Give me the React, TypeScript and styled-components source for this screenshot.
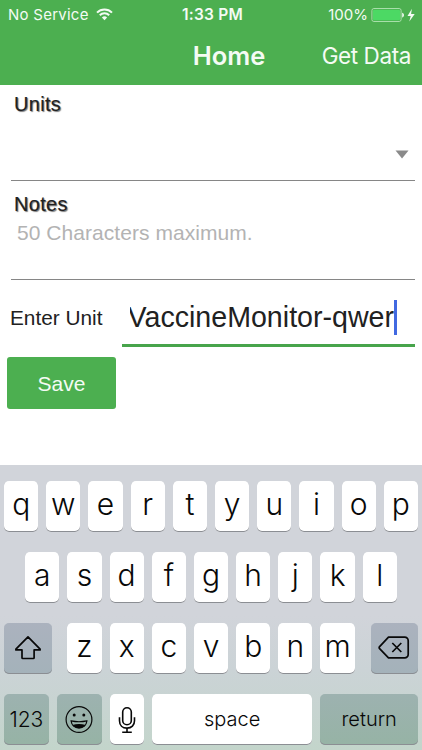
import styled, {createGlobalStyle} from "styled-components";
import {ReactNode, useState} from "react";

const GlobalStyle = createGlobalStyle`
  * {
    box-sizing: border-box;
  }

  body {
    margin: 0;
    background: #fff;
    font-family: "Liberation Sans", Arial, sans-serif;
  }
`

const Screen = styled.div`
  width: 422px;
  height: 750px;
  display: flex;
  flex-direction: column;
  overflow: hidden;
  background: #fff;
`

const Header = styled.header`
  height: 84.5px;
  flex: none;
  background: #4caf50;
  color: #f4fbf4;
  font-family: Inter, sans-serif;
`

const StatusBar = styled.div`
  display: grid;
  grid-template-columns: 1fr auto 1fr;
  align-items: center;
  height: 28px;
  padding: 0 7px 0 8px;
  font-size: 15px;
  line-height: 28px;
`

const StatusGroup = styled.div<{ $end?: boolean }>`
  display: flex;
  align-items: center;
  justify-content: ${({$end}) => $end ? "flex-end" : "flex-start"};
  white-space: nowrap;
  letter-spacing: ${({$end}) => $end ? "0" : "0.25px"};

  svg {
    flex: none;
  }
`

const WifiSlot = styled.span`
  display: flex;
  margin-left: 7px;
`

const Clock = styled.div`
  font-weight: 600;
  font-size: 15.5px;
  letter-spacing: 0.2px;
  padding: 1px 0 0 2px;
`

const NavBar = styled.div`
  display: grid;
  grid-template-columns: 1fr auto 1fr;
  align-items: center;
  height: 56px;
  padding: 0 11px 0 47px;
`

const Title = styled.h1`
  grid-column: 2;
  margin: 0;
  font-size: 25.5px;
  font-weight: 600;
  line-height: 56px;
`

const NavAction = styled.button`
  justify-self: end;
  padding: 0;
  border: 0;
  background: none;
  color: inherit;
  font: 400 22.5px/56px Inter, sans-serif;
  letter-spacing: -0.4px;
`

const Form = styled.main`
  flex: 1;
  padding: 0 7px;
  color: #212121;
`

const Field = styled.section<{ $height: number }>`
  display: flex;
  flex-direction: column;
  height: ${({$height}) => $height}px;
  margin-left: 4px;
  border-bottom: 1px solid #868686;
`

const FieldLabel = styled.label<{ $top: number }>`
  padding: ${({$top}) => $top}px 0 0 3px;
  font-size: 20px;
  line-height: 26px;
  letter-spacing: 0.3px;
  text-shadow: 1px 1px 1px #777;
  -webkit-text-stroke: 0.15px #212121;
`

const SelectBox = styled.div`
  display: flex;
  flex: 1;
  align-items: center;
  justify-content: flex-end;
  padding: 12px 6px 0 0;
`

const Placeholder = styled.div`
  padding-left: 6px;
  color: #b3b3b3;
  font-size: 21px;
  line-height: 31px;
  letter-spacing: 0.05px;
`

const UnitRow = styled.div`
  display: flex;
  height: 67px;
`

const UnitLabel = styled.label`
  flex: none;
  width: 115px;
  padding: 0 0 0 3px;
  font-size: 20.8px;
  line-height: 76px;
`

const UnitInput = styled.div`
  display: flex;
  flex: 1;
  align-items: center;
  min-width: 0;
  padding: 10px 18px 0 7.5px;
  border-bottom: 3px solid #47a44b;
`

const InputText = styled.span`
  display: flex;
  flex: 1;
  justify-content: flex-end;
  min-width: 0;
  overflow: hidden;
  font-size: 28.6px;
  line-height: 38px;
  white-space: nowrap;
`

const Caret = styled.span`
  width: 3px;
  height: 35px;
  flex: none;
  background: #4169e1;
`

const SaveButton = styled.button`
  display: block;
  width: 109px;
  height: 52px;
  margin-top: 9.7px;
  padding: 2px 0 0;
  border: 0;
  border-radius: 3px;
  background: #4caf50;
  color: #f4fbf4;
  font: 400 21px "Liberation Sans", Arial, sans-serif;
`

const KeyboardPanel = styled.div`
  display: flex;
  flex: none;
  flex-direction: column;
  gap: 20.2px;
  height: 285px;
  padding: 15.5px 4px 0;
  background: linear-gradient(#d1d4da 0, #d1d4da 150px, #cbd3d6 205px, #c3d5cb 285px);
  font-family: Inter, sans-serif;
`

const KeyRow = styled.div`
  display: flex;
  justify-content: center;
  gap: 8px;
`

const LetterGroup = styled.div`
  display: flex;
  flex: 1;
  justify-content: center;
  gap: 8px;
`

const tones = {
    light: "#fff",
    slate: "linear-gradient(#abb2be, #a4b2ba)",
    green: "linear-gradient(#9db2b0, #96b3a5)",
}

const KeyCap = styled.button<{ $width: number, $tone: keyof typeof tones, $size: number, $lift: number }>`
  display: flex;
  flex: none;
  align-items: center;
  justify-content: center;
  width: ${({$width}) => $width}px;
  height: 51px;
  padding: 0 0 ${({$lift}) => $lift}px;
  border: 0;
  border-radius: 5px;
  background: ${({$tone}) => tones[$tone]};
  box-shadow: inset 0 -1px 0 #8b8e93;
  color: #080808;
  font-family: inherit;
  font-size: ${({$size}) => $size}px;
  font-weight: ${({$size}) => $size > 25 ? 300 : 350};
  line-height: 1;
`

interface KeyProps {
    children: ReactNode
    label?: string
    width?: number
    tone?: keyof typeof tones
    size?: number
    lift?: number
    onPress?: () => void
}

const Key = ({children, label, width = 34.2, tone = "light", size = 30, lift = 4, onPress}: KeyProps) => (
    <KeyCap aria-label={label} $width={width} $tone={tone} $size={size} $lift={lift} onClick={onPress}>{children}</KeyCap>
)

const WifiIcon = () => (
    <svg width="17" height="13" viewBox="0 0 17 13" fill="none" stroke="#f4fbf4" strokeWidth="2">
        <path d="M1 4.6a10.6 10.6 0 0 1 15 0" />
        <path d="M3.8 7.3a6.6 6.6 0 0 1 9.4 0" />
        <path d="M5.9 9.6a3.7 3.7 0 0 1 5.2 0L8.5 12.2z" fill="#f4fbf4" stroke="none" />
    </svg>
)

const BatteryIcon = () => (
    <svg width="47" height="16" viewBox="0 0 47 16">
        <rect x="3.9" y="1.5" width="29.2" height="13" rx="2" fill="none" stroke="#a8dfaa" />
        <rect x="5" y="2.7" width="27" height="10.6" rx="1" fill="#4cd964" />
        <path d="M34.2 5.7c2.3.5 2.3 4.2 0 4.8z" fill="#f4fbf4" />
        <path d="M43.9 1.8l-4.4 7.3h3.2l-1.4 5.5 5.4-7.6h-3.6z" fill="#f4fbf4" />
    </svg>
)

const ArrowDown = () => (
    <svg width="14" height="9" viewBox="0 0 14 9">
        <path d="M.5.5h13L7 8.5z" fill="#8a8a8a" />
    </svg>
)

const ShiftIcon = () => (
    <svg width="28" height="26" viewBox="0 0 28 26" fill="none" stroke="#080808" strokeWidth="1.7" strokeLinejoin="round">
        <path d="M14 1.8L26.1 14.1v.8h-6v7.8a.8.8 0 0 1-.8.8H8.8a.8.8 0 0 1-.8-.8v-7.8H1.9v-.8z" />
    </svg>
)

const DeleteIcon = () => (
    <svg width="32" height="24" viewBox="0 0 32 24" fill="none" stroke="#080808" strokeWidth="1.7" strokeLinejoin="round">
        <path d="M10.5 1.2h16.2a3.5 3.5 0 0 1 3.5 3.5v13.7a3.5 3.5 0 0 1-3.5 3.5H10.5L1.6 12.7c-.6-.7-.6-1.4 0-2.1z" />
        <path d="M14.3 7l9 9m0-9l-9 9" />
    </svg>
)

const EmojiIcon = () => (
    <svg width="28" height="28" viewBox="0 0 28 28" fill="none" stroke="#080808" strokeWidth="1.2">
        <circle cx="14" cy="13.5" r="12.9" />
        <circle cx="9.2" cy="9.1" r="1.5" fill="#080808" stroke="none" />
        <circle cx="18.8" cy="9.1" r="1.5" fill="#080808" stroke="none" />
        <path d="M6.1 14.9c5.2 1.1 10.6 1.1 15.8 0-.5 4.3-3.7 7.2-7.9 7.2s-7.4-2.9-7.9-7.2z" />
        <path d="M7.3 19c4.5-1.5 8.9-1.5 13.4 0-1.4 2-3.9 3.1-6.7 3.1s-5.3-1.1-6.7-3.1z" fill="#080808" stroke="none" />
    </svg>
)

const MicIcon = () => (
    <svg width="18" height="28" viewBox="0 0 18 28" fill="none" stroke="#080808" strokeWidth="1.6">
        <rect x="4.7" y="1.8" width="8.6" height="17" rx="4.3" />
        <path d="M1.5 11.2v3.5c0 4.5 3 7.4 7.5 7.4s7.5-2.9 7.5-7.4v-3.5" />
        <path d="M9 22v4.2M4.2 26.2h9.6" />
    </svg>
)

const App = () => {
    const [unit, setUnit] = useState("VaccineMonitor-qwer")

    const renderLetters = (letters: string) => letters.split("").map((letter) => (
        <Key key={letter} onPress={() => setUnit(unit + letter)}>{letter}</Key>
    ))

    return (
        <Screen>
            <GlobalStyle />
            <Header>
                <StatusBar>
                    <StatusGroup>No Service<WifiSlot><WifiIcon /></WifiSlot></StatusGroup>
                    <Clock>1:33 PM</Clock>
                    <StatusGroup $end>100%<BatteryIcon /></StatusGroup>
                </StatusBar>
                <NavBar>
                    <Title>Home</Title>
                    <NavAction>Get Data</NavAction>
                </NavBar>
            </Header>
            <Form>
                <Field $height={96.5}>
                    <FieldLabel $top={6}>Units</FieldLabel>
                    <SelectBox><ArrowDown /></SelectBox>
                </Field>
                <Field $height={99}>
                    <FieldLabel $top={10}>Notes</FieldLabel>
                    <Placeholder>50 Characters maximum.</Placeholder>
                </Field>
                <UnitRow>
                    <UnitLabel>Enter Unit</UnitLabel>
                    <UnitInput>
                        <InputText>{unit}</InputText>
                        <Caret />
                    </UnitInput>
                </UnitRow>
                <SaveButton>Save</SaveButton>
            </Form>
            <KeyboardPanel>
                <KeyRow>{renderLetters("qwertyuiop")}</KeyRow>
                <KeyRow>{renderLetters("asdfghjkl")}</KeyRow>
                <KeyRow>
                    <Key label="shift" width={47.5} tone="slate" lift={0}><ShiftIcon /></Key>
                    <LetterGroup>{renderLetters("zxcvbnm")}</LetterGroup>
                    <Key label="delete" width={47.5} tone="slate" lift={0} onPress={() => setUnit(unit.slice(0, -1))}><DeleteIcon /></Key>
                </KeyRow>
                <KeyRow>
                    <Key width={44.8} tone="green" size={21} lift={0}>123</Key>
                    <Key label="emoji" width={44.8} tone="green" lift={0}><EmojiIcon /></Key>
                    <Key label="dictation" lift={0}><MicIcon /></Key>
                    <Key width={160.6} size={20} lift={2}>space</Key>
                    <Key width={97.6} tone="green" size={20} lift={2}>return</Key>
                </KeyRow>
            </KeyboardPanel>
        </Screen>
    )
}

export default App;
